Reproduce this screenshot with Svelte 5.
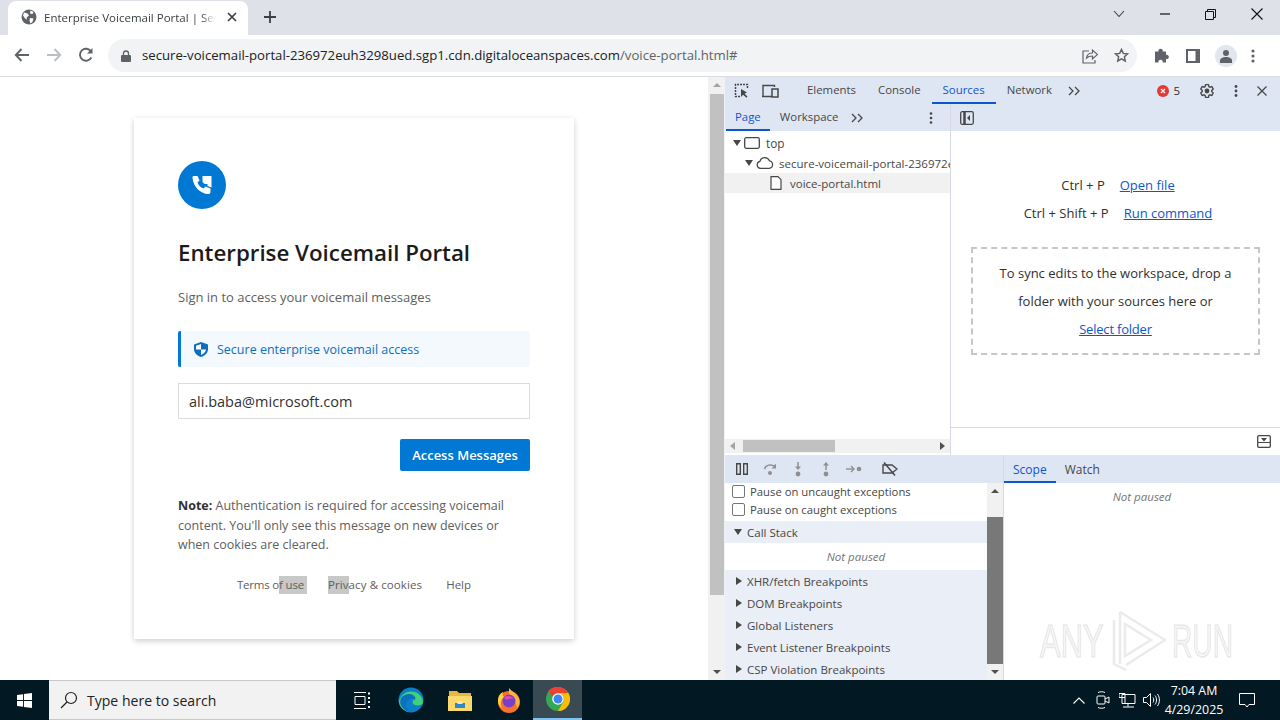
<script>
  const mainTabs = ['Elements', 'Console', 'Sources', 'Network'];
  const sections = ['XHR/fetch Breakpoints', 'DOM Breakpoints', 'Global Listeners', 'Event Listener Breakpoints', 'CSP Violation Breakpoints'];
</script>

<div class="screen">
  <header class="tabstrip">
    <div class="tab">
      <svg class="globe" width="16" height="16" viewBox="0 0 16 16"><circle cx="8" cy="8" r="7.5" fill="#5f6368"/><path d="M3 3.5l3.500 1 1.500 2-2 1.500-.5 2.500-1.500-1-2-3zM9.500 1.500l3 1.500-1 2-2.500-.5zM9 9l3.500.5-1 3.500-2 1.500-1-3z" fill="#fff"/></svg>
      <span class="tab-title">Enterprise Voicemail Portal | Secu</span>
      <svg width="10" height="10" viewBox="0 0 10 10"><path d="M1 1l8 8M9 1l-8 8" stroke="#3c4043" stroke-width="1.7"/></svg>
    </div>
    <svg class="newtab" width="12" height="12" viewBox="0 0 12 12"><path d="M6 0v12M0 6h12" stroke="#3c4043" stroke-width="1.8"/></svg>
    <div class="winctl">
      <svg width="12" height="8" viewBox="0 0 12 8"><path d="M1 1l5 5.500L11 1" fill="none" stroke="#3c4043" stroke-width="1.1"/></svg>
      <svg width="10" height="2" viewBox="0 0 10 2"><path d="M0 1h10" stroke="#111" stroke-width="1.2"/></svg>
      <svg width="11" height="11" viewBox="0 0 11 11"><path d="M.5 2.500h8v8h-8zM2.500 2.500v-2h8v8h-2" fill="none" stroke="#111"/></svg>
      <svg width="12" height="12" viewBox="0 0 12 12"><path d="M.5.500l11 11M11.500.500l-11 11" stroke="#111" stroke-width="1.1"/></svg>
    </div>
  </header>

  <div class="toolbar">
    <svg class="nav" width="16" height="14" viewBox="0 0 16 14"><path d="M15 7H2M7.500 1L1.800 7l5.700 6" fill="none" stroke="#5f6368" stroke-width="1.9"/></svg>
    <svg class="nav" width="16" height="14" viewBox="0 0 16 14"><path d="M1 7h13M8.500 1l5.700 6-5.700 6" fill="none" stroke="#bcc0c4" stroke-width="1.9"/></svg>
    <svg class="nav" width="16" height="16" viewBox="0 0 16 16"><path d="M13.300 10.500A6 6 0 1 1 13 4.500" fill="none" stroke="#5f6368" stroke-width="1.9"/><path d="M14.500 1v5.500H9z" fill="#5f6368"/></svg>
    <div class="omnibox">
      <svg width="10" height="12" viewBox="0 0 10 12"><path d="M2.500 5V3.500a2.500 2.500 0 0 1 5 0V5" fill="none" stroke="#5f6368" stroke-width="1.3"/><rect y="5" width="10" height="7" rx="1" fill="#5f6368"/></svg>
      <span class="url"><b>secure-voicemail-portal-236972euh3298ued.sgp1.cdn.digitaloceanspaces.com</b>/voice-portal.html#</span>
      <svg class="share" width="16" height="16" viewBox="0 0 16 16"><path d="M7 3H1v12h12v-3M4.500 10C5 6.500 8 5 10.500 5V2l5 4.500-5 4.500V8C8 8 6 8.500 4.500 10z" fill="none" stroke="#5f6368" stroke-width="1.2"/></svg>
      <svg width="15" height="15" viewBox="0 0 15 15"><path d="M7.500 1.500l1.800 3.900 4.200.5-3.100 2.900.8 4.200-3.700-2.100-3.700 2.100.8-4.200L1.500 5.900l4.200-.5z" fill="none" stroke="#5f6368" stroke-width="1.5"/></svg>
    </div>
    <div class="actions">
      <svg width="15" height="15" viewBox="0 0 15 15"><path d="M1 3.500h3.500a2.200 2.200 0 1 1 4.200 0H12v3.300a2.200 2.200 0 1 1 0 4.200V14.500H8.700a2.200 2.200 0 1 0-4.200 0H1z" fill="#5f6368"/></svg>
      <svg width="14" height="14" viewBox="0 0 14 14"><path d="M0 0h14v14H0z" fill="#5f6368"/><path d="M2 2h7.500v10H2z" fill="#fff"/></svg>
      <div class="avatar"><svg width="14" height="14" viewBox="0 0 14 14"><circle cx="7" cy="4" r="3" fill="#5f6368"/><path d="M1 14v-2.500C1 9.500 4 8 7 8s6 1.500 6 3.500V14z" fill="#5f6368"/></svg></div>
      <svg width="4" height="14" viewBox="0 0 4 14"><circle cx="2" cy="2" r="1.600" fill="#5f6368"/><circle cx="2" cy="7" r="1.600" fill="#5f6368"/><circle cx="2" cy="12" r="1.600" fill="#5f6368"/></svg>
    </div>
  </div>

  <main class="content">
    <section class="page">
      <div class="card">
        <div class="logo">
          <svg width="20" height="20" viewBox="0 0 20 20"><path d="M1.500 1h4l2 4.500-2 2c1 3 3 5 6 6l2-2 5 2v3.500c0 1-1 2-2 2C8 19 1 11 .5 2.500.5 1.500 1 1 1.500 1z" fill="#fff"/><path d="M10.500 1H19.500v11.500l-4-1.500V9h-3L10.500 7z" fill="#fff"/></svg>
        </div>
        <h1>Enterprise Voicemail Portal</h1>
        <p class="sub">Sign in to access your voicemail messages</p>
        <div class="banner">
          <svg width="14" height="15" viewBox="0 0 14 15"><path d="M7 0l7 2.500v4.500c0 3.800-3 6.800-7 8-4-1.200-7-4.200-7-8V2.500z" fill="#106ebe"/><path d="M7 2v5.500h5c-.3 2.500-2.400 4.600-5 5.500V7.500H2V3.800z" fill="#fff"/></svg>
          <span>Secure enterprise voicemail access</span>
        </div>
        <div class="input">ali.baba@microsoft.com</div>
        <div class="btn-row"><button>Access Messages</button></div>
        <p class="note"><strong>Note:</strong> Authentication is required for accessing voicemail content. You'll only see this message on new devices or when cookies are cleared.</p>
        <div class="links">
          <span class="terms">Terms o<i>f use</i></span>
          <span class="privacy"><i>Priv</i>acy &amp; cookies</span>
          <span>Help</span>
        </div>
      </div>
    </section>

    <div class="vscroll">
      <span class="arr up"></span>
      <div class="thumb"></div>
      <span class="arr down"></span>
    </div>

    <aside class="devtools">
      <div class="dt-top">
        <svg class="ic" width="16" height="15" viewBox="0 0 16 15"><path d="M6 13.500H1.500V1.500h12V6" fill="none" stroke="#474747" stroke-width="1.500" stroke-dasharray="2 1"/><path d="M7 6v8l2-2.200 3.500 3 1-1.200L10.500 10.800 13 9.500z" fill="#474747"/></svg>
        <svg class="ic ic2" width="17" height="14" viewBox="0 0 17 14"><path d="M10 12.500H1V1.500h11.500V3M0 12.500h8" fill="none" stroke="#474747" stroke-width="1.400"/><rect x="10" y="5" width="6" height="8" fill="none" stroke="#474747" stroke-width="1.500"/></svg>
        <div class="main-tabs">
          {#each mainTabs as t}
            <span class="mt" class:active={t === 'Sources'}>{t}</span>
          {/each}
        </div>
        <span class="chev">
          <svg width="12" height="10" viewBox="0 0 12 10"><path d="M1 1l4 4-4 4M7 1l4 4-4 4" fill="none" stroke="#474747" stroke-width="1.300"/></svg>
        </span>
        <div class="dt-right">
          <span class="err"><svg width="12" height="12" viewBox="0 0 12 12"><circle cx="6" cy="6" r="6" fill="#e23b36"/><path d="M4 4l4 4M8 4l-4 4" stroke="#fff" stroke-width="1.200"/></svg>5</span>
          <svg width="16" height="16" viewBox="0 0 24 24"><path d="M19.140 12.940c.04-.3.06-.61.06-.94 0-.32-.02-.64-.07-.94l2.030-1.580c.18-.14.23-.41.12-.61l-1.920-3.320c-.12-.22-.37-.29-.59-.22l-2.390.96c-.5-.38-1.030-.7-1.620-.94L14.400 2.810c-.04-.24-.24-.41-.48-.41h-3.840c-.24 0-.43.17-.47.41L9.250 5.350c-.59.24-1.130.57-1.620.94L5.240 5.330c-.22-.08-.47 0-.59.22L2.740 8.870c-.12.21-.08.47.12.61l2.030 1.580c-.05.3-.09.63-.09.94s.02.64.07.94l-2.030 1.580c-.18.14-.23.41-.12.61l1.920 3.320c.12.22.37.29.59.22l2.390-.96c.5.38 1.030.7 1.620.94l.36 2.540c.05.24.24.41.48.41h3.840c.24 0 .44-.17.47-.41l.36-2.540c.59-.24 1.130-.56 1.620-.94l2.390.96c.22.08.47 0 .59-.22l1.920-3.320c.12-.22.07-.47-.12-.61z" fill="none" stroke="#474747" stroke-width="2"/><circle cx="12" cy="12" r="3.600" fill="#474747"/></svg>
          <svg width="4" height="12" viewBox="0 0 4 12"><circle cx="2" cy="1.500" r="1.400" fill="#474747"/><circle cx="2" cy="6" r="1.400" fill="#474747"/><circle cx="2" cy="10.500" r="1.400" fill="#474747"/></svg>
          <svg width="10" height="10" viewBox="0 0 10 10"><path d="M.5.500l9 9M9.500.500l-9 9" stroke="#474747" stroke-width="1.300"/></svg>
        </div>
      </div>

      <div class="dt-sources">
        <div class="nav-pane">
          <div class="sub-tabs">
            <span class="st active">Page</span>
            <span class="st">Workspace</span>
            <svg width="12" height="10" viewBox="0 0 12 10"><path d="M1 1l4 4-4 4M7 1l4 4-4 4" fill="none" stroke="#474747" stroke-width="1.300"/></svg>
            <svg class="kebab" width="4" height="12" viewBox="0 0 4 12"><circle cx="2" cy="1.500" r="1.300" fill="#474747"/><circle cx="2" cy="6" r="1.300" fill="#474747"/><circle cx="2" cy="10.500" r="1.300" fill="#474747"/></svg>
          </div>
          <div class="tree">
            <div class="row r0"><span class="tri"></span><svg width="16" height="12" viewBox="0 0 16 12"><rect x=".7" y=".7" width="14.600" height="10.600" rx="1.500" fill="none" stroke="#474747" stroke-width="1.300"/></svg><span>top</span></div>
            <div class="row r1"><span class="tri"></span><svg width="18" height="12" viewBox="0 0 18 12"><path d="M4.500 11.300a3.500 3.500 0 0 1-.6-6.900 5 5 0 0 1 9.500-.6 3.800 3.800 0 0 1 0 7.500z" fill="none" stroke="#474747" stroke-width="1.200"/></svg><span class="clip">secure-voicemail-portal-236972euh3298ued.sgp1</span></div>
            <div class="row r2"><svg width="12" height="14" viewBox="0 0 12 14"><path d="M1 .7h7l3 3v9.600H1z" fill="#fff" stroke="#474747" stroke-width="1.200"/></svg><span>voice-portal.html</span></div>
          </div>
          <div class="hscroll">
            <span class="harr l"></span>
            <div class="hthumb"></div>
            <span class="harr r"></span>
          </div>
        </div>

        <div class="editor">
          <div class="editor-bar">
            <svg width="14" height="14" viewBox="0 0 14 14"><rect x=".7" y=".7" width="12.600" height="12.600" rx="1.500" fill="none" stroke="#474747" stroke-width="1.300"/><path d="M4.500 1v12" stroke="#474747" stroke-width="2.500"/><path d="M10 4v6L7 7z" fill="#474747"/></svg>
          </div>
          <div class="editor-body">
            <div class="shortcuts">
              <div class="sc"><span>Ctrl + P</span><a href="#a">Open file</a></div>
              <div class="sc"><span>Ctrl + Shift + P</span><a href="#a">Run command</a></div>
            </div>
            <div class="drop">
              <div>To sync edits to the workspace, drop a</div>
              <div>folder with your sources here or</div>
              <div><a href="#a">Select folder</a></div>
            </div>
          </div>
          <div class="editor-foot">
            <svg width="14" height="13" viewBox="0 0 14 13"><rect x=".7" y=".7" width="12.600" height="11.600" rx="1" fill="none" stroke="#474747" stroke-width="1.300"/><path d="M1 7.500h12" stroke="#474747"/><path d="M4 3h6L7 6.500z" fill="#474747"/></svg>
          </div>
        </div>
      </div>

      <div class="debug">
        <div class="dbg-left">
          <div class="dbg-bar">
            <svg width="12" height="12" viewBox="0 0 12 12"><path d="M.7.700h3.600v10.600H.7zM7.700.700h3.600v10.600H7.700z" fill="none" stroke="#474747" stroke-width="1.400"/></svg>
            <svg width="14" height="12" viewBox="0 0 14 12"><path d="M1.500 6C2.500 2 8 .500 12 3.500" fill="none" stroke="#8f8f8f" stroke-width="1.500"/><path d="M13 .5v5H8.500z" fill="#8f8f8f"/><circle cx="7" cy="10" r="2" fill="#8f8f8f"/></svg>
            <svg width="10" height="15" viewBox="0 0 10 15"><path d="M5 0v6" stroke="#8f8f8f" stroke-width="1.500"/><path d="M2 4.500h6L5 8z" fill="#8f8f8f"/><circle cx="5" cy="12" r="2.400" fill="#8f8f8f"/></svg>
            <svg width="10" height="15" viewBox="0 0 10 15"><path d="M5 8V2" stroke="#8f8f8f" stroke-width="1.500"/><path d="M2 3.500h6L5 0z" fill="#8f8f8f"/><circle cx="5" cy="12" r="2.400" fill="#8f8f8f"/></svg>
            <svg width="16" height="8" viewBox="0 0 16 8"><path d="M0 4h7" stroke="#8f8f8f" stroke-width="1.400"/><path d="M5 1l3 3-3 3" fill="none" stroke="#8f8f8f" stroke-width="1.400"/><circle cx="13" cy="4" r="2.300" fill="#8f8f8f"/></svg>
            <svg width="16" height="14" viewBox="0 0 16 14"><path d="M1 3h9l5 4-5 4H1z" fill="none" stroke="#474747" stroke-width="1.400"/><path d="M2 0.500l11 13" stroke="#474747" stroke-width="1.500"/></svg>
          </div>
          <div class="dbg-main">
            <div class="dbg-list">
              <label><span class="cb"></span>Pause on uncaught exceptions</label>
              <label class="l2"><span class="cb"></span>Pause on caught exceptions</label>
              <div class="sec open"><span class="tri"></span>Call Stack</div>
              <div class="notpaused">Not paused</div>
              {#each sections as s}
                <div class="sec closed"><span class="tri right"></span>{s}</div>
              {/each}
            </div>
            <div class="dbg-scroll">
              <span class="arr up dark"></span>
              <div class="dbg-thumb"></div>
              <span class="arr down dark"></span>
            </div>
          </div>
        </div>
        <div class="dbg-right">
          <div class="dbg-tabs"><span class="st2 active">Scope</span><span class="st2">Watch</span></div>
          <div class="notpaused np2">Not paused</div>
        </div>
      </div>

      <div class="watermark">
        <span class="wm-any">ANY</span>
        <svg width="56" height="62" viewBox="0 0 56 62"><path d="M10 2L55 30 16 55M4 10v44l12 6M10 2v52M15 14l26 16-26 16z" fill="none" stroke="#e4e4e4" stroke-width="2.500" opacity=".75"/></svg>
        <span class="wm-run">RUN</span>
      </div>
    </aside>
  </main>

  <footer class="taskbar">
    <div class="start"><svg width="15" height="15" viewBox="0 0 15 15"><path d="M0 2.100L6.100 1.200V7H0zM7 1.100L15 0v7H7zM0 8h6.100v5.800L0 12.900zM7 8h8v7l-8-1.100z" fill="#fff"/></svg></div>
    <div class="search">
      <svg width="18" height="18" viewBox="0 0 18 18"><circle cx="11" cy="7" r="5.500" fill="none" stroke="#222" stroke-width="1.200"/><path d="M7 11l-6 6" stroke="#222" stroke-width="1.300"/></svg>
      <span>Type here to search</span>
    </div>
    <div class="tb-apps">
      <div class="tb-app"><svg width="16" height="17" viewBox="0 0 16 17"><path d="M0 .5h12M0 16.500h12M1 4.500h10v8H1z" fill="none" stroke="#fff"/><path d="M14 .5h2v2h-2zM14 5h2v2h-2zM14 9h2v2h-2zM14 14h2v2h-2z" fill="#fff"/></svg></div>
      <div class="tb-app"><svg width="26" height="26" viewBox="0 0 26 26"><circle cx="13" cy="13" r="12.500" fill="#0c7fc9"/><path d="M1 14C3 6 11 3 17 5c5 2 8 6 8 10 0 3-4 4-8 3-3-1-3-4-1-5-3-2-8-1-9 4-.5 3 1 6 4 8C6 24 1 20 1 14z" fill="#3ed07a"/><path d="M3 11c3-4 9-5 12-3 2 1.500 3 3 2 5-3-2-8-1-9 4-.5 3 1 6 4 8C6 24 0 18 3 11z" fill="#0c6fc0"/></svg></div>
      <div class="tb-app"><svg width="24" height="22" viewBox="0 0 24 22"><path d="M1 2h8l2 2h12v4H1z" fill="#e8b73f"/><path d="M0 7h24v15H0z" fill="#fbd96d"/><path d="M7 14h10v5H7z" fill="#2f86c9"/><path d="M9.500 12h5v3h-5z" fill="#f8e7a9"/></svg></div>
      <div class="tb-app"><svg width="24" height="25" viewBox="0 0 24 25"><circle cx="12" cy="14" r="11" fill="#f9722a"/><path d="M12 0c2 3 8 5 10 11 1 4 0 7-2 9-1-7-5-10-8-11z" fill="#fbb43b"/><path d="M1 13C1 7 4 5 6 4c-1 3 0 4 1 5-4 3-4 8-2 11-2-1-4-4-4-7z" fill="#fcd440"/><circle cx="12" cy="13" r="6.500" fill="#7a3fc8"/><path d="M7 9c3-2 8-1 10 2-3-1-6 0-8 1z" fill="#e24ab0"/></svg></div>
      <div class="tb-app active"><svg width="24" height="24" viewBox="0 0 24 24"><circle cx="12" cy="12" r="12" fill="#34a853"/><path d="M12 0a12 12 0 0 1 10.400 6H12a6 6 0 0 0-5.500 3.600L2 3.900A12 12 0 0 1 12 0z" fill="#ea4335"/><path d="M22.400 6A12 12 0 0 1 12 24l5.200-9A6 6 0 0 0 12 6z" fill="#fbbc05"/><circle cx="12" cy="12" r="5.800" fill="#fff"/><circle cx="12" cy="12" r="4.500" fill="#4285f4"/></svg></div>
    </div>
    <div class="tray">
      <span class="ti"><svg width="12" height="7" viewBox="0 0 12 7"><path d="M.5 6.500L6 1l5.500 5.500" fill="none" stroke="#fff" stroke-width="1.100"/></svg></span>
      <span class="ti"><svg width="14" height="18" viewBox="0 0 14 18"><path d="M2 1.500c2-1 5-1 7 0M2 16.500c2 1 5 1 7 0" fill="none" stroke="#fff"/><rect x="1" y="5" width="8" height="8" rx="1" fill="none" stroke="#fff"/><path d="M9 8l4-2v6l-4-2" fill="none" stroke="#fff"/></svg></span>
      <span class="ti"><svg width="17" height="15" viewBox="0 0 17 15"><path d="M3 1.500h13v9H3zM0 .5h6v4H0zM9 10.500v3M4 14h11M6 4.500v6" fill="none" stroke="#fff"/></svg></span>
      <span class="ti"><svg width="17" height="14" viewBox="0 0 17 14"><path d="M.5 4.500h3l4-4v13l-4-4h-3zM10 4.500c1 1.500 1 3.500 0 5M12 2.500c2 2.500 2 6.500 0 9M14.500 1c2.500 3.500 2.500 8.500 0 12" fill="none" stroke="#fff"/></svg></span>
      <div class="clock"><div>7:04 AM</div><div>4/29/2025</div></div>
      <span class="ti notif"><svg width="16" height="15" viewBox="0 0 16 15"><path d="M.5.500h15v11H10l-2 2.500-2-2.500H.5z" fill="none" stroke="#fff"/></svg></span>
    </div>
  </footer>
</div>

<style>
  :global(body) { margin: 0; }
  .screen {
    width: 1280px;
    height: 720px;
    overflow: hidden;
    display: flex;
    flex-direction: column;
    font-family: "Open Sans", "Noto Sans", sans-serif;
    background: #fff;
    color: #303030;
  }
  svg { flex: none; }

  /* browser chrome */
  .tabstrip {
    height: 35px;
    flex: none;
    background: #dee1e8;
    display: flex;
    align-items: flex-end;
    padding-left: 8px;
  }
  .tab {
    width: 240px;
    height: 34px;
    box-sizing: border-box;
    background: #fff;
    border-radius: 8px 8px 0 0;
    display: flex;
    align-items: center;
    padding: 0 11px 2px 13px;
    gap: 7px;
  }
  .tab-title {
    font-size: 11.500px;
    color: #3c4043;
    flex: 1;
    white-space: nowrap;
    overflow: hidden;
    margin-right: 5px;
    mask-image: linear-gradient(to right, #000 92%, transparent);
  }
  .newtab { margin: 0 0 12px 16px; }
  .winctl {
    margin-left: auto;
    height: 35px;
    box-sizing: border-box;
    display: flex;
    align-items: center;
    gap: 35px;
    padding: 0 17px 7px 0;
  }
  .toolbar {
    height: 42px;
    flex: none;
    box-sizing: border-box;
    border-bottom: 1px solid #dadce0;
    display: flex;
    align-items: center;
    padding-left: 14px;
  }
  .nav { margin: -1px 16px 0 0; }
  .omnibox {
    width: 1029px;
    height: 33px;
    margin-left: -2px;
    box-sizing: border-box;
    background: #f1f3f4;
    border-radius: 17px;
    display: flex;
    align-items: center;
    padding: 0 8px 0 13px;
    gap: 11px;
  }
  .url { flex: 1; margin-top: -2px; color: #5f6368; white-space: nowrap; font-size: 13.180px; }
  .url b { font-weight: 400; color: #202124; }
  .share { margin-right: 5px; }
  .actions {
    display: flex;
    align-items: center;
    gap: 17px;
    margin-left: 17px;
  }
  .avatar {
    width: 22px;
    height: 22px;
    margin: 0 -3px 0 -2px;
    border-radius: 50%;
    background: #e3e6ec;
    display: flex;
    align-items: center;
    justify-content: center;
  }

  /* page */
  .content {
    flex: 1;
    min-height: 0;
    display: flex;
  }
  .page {
    width: 708px;
    flex: none;
    display: flex;
    justify-content: center;
    padding-top: 41px;
    box-sizing: border-box;
  }
  .card {
    width: 440px;
    height: 521px;
    box-sizing: border-box;
    padding: 43px 44px 0;
    box-shadow: 0 2px 6px rgba(0, 0, 0, 0.2);
    background: #fff;
  }
  .logo {
    width: 48px;
    height: 48px;
    border-radius: 50%;
    background: #0078d4;
    display: flex;
    align-items: center;
    justify-content: center;
  }
  h1 {
    margin: 27px 0 0;
    font-size: 22.300px;
    line-height: 34px;
    font-weight: 600;
    color: #1b1b1b;
  }
  .sub {
    margin: 18px 0 0;
    font-size: 13px;
    line-height: 18px;
    color: #605e5c;
  }
  .banner {
    margin-top: 25px;
    height: 36px;
    box-sizing: border-box;
    background: #f3f9fd;
    border-left: 3px solid #0078d4;
    display: flex;
    align-items: center;
    gap: 9px;
    padding-left: 13px;
    font-size: 12.500px;
    color: #106ebe;
    border-radius: 2px;
  }
  .input {
    margin-top: 16px;
    height: 36px;
    box-sizing: border-box;
    border: 1px solid #dcdcdc;
    padding-left: 10px;
    line-height: 36px;
    font-size: 14.500px;
    color: #323130;
  }
  .btn-row {
    margin-top: 20px;
    display: flex;
    justify-content: flex-end;
  }
  button {
    width: 130px;
    height: 32px;
    border: 0;
    padding: 0;
    background: #0078d4;
    color: #fff;
    font: 600 13px "Open Sans", sans-serif;
    border-radius: 2px;
  }
  .note {
    margin: 25px 0 0;
    font-size: 12.500px;
    line-height: 19.500px;
    color: #605e5c;
  }
  .note strong { color: #323130; font-weight: 700; }
  .links {
    margin-top: 21px;
    display: flex;
    justify-content: center;
    gap: 21px;
    font-size: 11.500px;
    line-height: 18px;
    color: #605e5c;
  }
  .terms { letter-spacing: -0.2px; padding-right: 3px; }
  .privacy { letter-spacing: 0.1px; padding-right: 3px; }
  .links i { font-style: normal; background: #c8c8c8; display: inline-block; }
  .terms i { padding-right: 3px; margin-right: -3px; }

  .vscroll {
    width: 17px;
    flex: none;
    background: #f1f1f1;
    display: flex;
    flex-direction: column;
    align-items: center;
  }
  .thumb {
    width: 14px;
    height: 501px;
    background: #c1c1c1;
    margin-top: 1px;
    margin-bottom: auto;
  }
  .arr {
    width: 0;
    height: 0;
    border-left: 4px solid transparent;
    border-right: 4px solid transparent;
    margin: 6px 0;
    flex: none;
  }
  .arr.up { border-bottom: 4px solid #a3a3a3; }
  .arr.down { border-top: 4px solid #505050; }
  .arr.up.dark { border-bottom-color: #505050; }

  /* devtools */
  .devtools {
    flex: 1;
    min-width: 0;
    position: relative;
    display: flex;
    flex-direction: column;
    font-size: 11.400px;
    overflow: hidden;
  }
  .dt-top {
    height: 27px;
    flex: none;
    background: #dfe6f3;
    display: flex;
    align-items: center;
    padding-left: 9px;
  }
  .ic2 { margin-left: 12px; }
  .main-tabs { display: flex; margin-left: 17px; }
  .mt {
    padding: 0 11px;
    line-height: 25px;
    height: 27px;
    box-sizing: border-box;
    color: #474747;
  }
  .mt.active { color: #0b57d0; border-bottom: 2px solid #0b57d0; }
  .chev { margin-left: 5px; display: flex; }
  .dt-right {
    margin-left: auto;
    display: flex;
    align-items: center;
    gap: 19px;
    padding-right: 13px;
  }
  .err { display: flex; align-items: center; gap: 4px; font-size: 11.500px; }
  .dt-sources { height: 351px; flex: none; display: flex; }
  .nav-pane {
    width: 225px;
    flex: none;
    border-right: 1px solid #d6dbe3;
    display: flex;
    flex-direction: column;
  }
  .sub-tabs {
    height: 27px;
    flex: none;
    background: #dfe6f3;
    display: flex;
    align-items: center;
    padding-left: 1px;
  }
  .st { padding: 0 9px; line-height: 25px; height: 27px; box-sizing: border-box; color: #474747; margin-right: 1px; }
  .st.active { color: #0b57d0; border-bottom: 2px solid #0b57d0; }
  .sub-tabs svg { margin-left: 3px; }
  .sub-tabs .kebab { margin-left: 66px; }
  .tree { flex: 1; padding-top: 2px; }
  .row {
    height: 20px;
    display: flex;
    align-items: center;
    gap: 3px;
    color: #474747;
    font-size: 11.800px;
    white-space: nowrap;
    overflow: hidden;
  }
  .r0 { padding-left: 8px; }
  .r1 { padding-left: 20px; }
  .r2 { padding-left: 45px; background: #f1f1f1; gap: 8px; font-size: 11.500px; }
  .r0 svg { margin-right: 3px; }
  .r1 svg { margin-right: 2px; }
  .clip { font-size: 11.500px; }
  .tri {
    width: 0;
    height: 0;
    flex: none;
    border-left: 4px solid transparent;
    border-right: 4px solid transparent;
    border-top: 6px solid #474747;
  }
  .tri.right {
    border-top: 4px solid transparent;
    border-bottom: 4px solid transparent;
    border-left: 6px solid #474747;
    border-right: 0;
  }
  .hscroll {
    height: 14px;
    margin-bottom: 2px;
    background: #f1f1f1;
    display: flex;
    align-items: center;
    flex: none;
  }
  .hthumb { width: 92px; height: 12px; background: #c1c1c1; margin-left: 3px; margin-right: auto; }
  .harr { width: 0; height: 0; border-top: 4px solid transparent; border-bottom: 4px solid transparent; margin: 0 5px; flex: none; }
  .harr.l { border-right: 5px solid #a3a3a3; }
  .harr.r { border-left: 5px solid #505050; }

  .editor { flex: 1; min-width: 0; display: flex; flex-direction: column; }
  .editor-bar {
    height: 27px;
    flex: none;
    background: #dfe6f3;
    display: flex;
    align-items: center;
    padding-left: 9px;
  }
  .editor-body { flex: 1; padding: 44px 20px 0; font-size: 13px; }
  .shortcuts { display: flex; flex-direction: column; gap: 8px; }
  .sc { display: flex; justify-content: center; gap: 15px; line-height: 20px; margin-left: 5px; }
  .sc span { color: #303030; }
  a { color: #0b57d0; text-decoration: underline; }
  .drop {
    margin-top: 24px;
    height: 108px;
    box-sizing: border-box;
    border: 2px dashed #c4c7c5;
    text-align: center;
    line-height: 28px;
    padding-top: 10px;
  }
  .drop a { letter-spacing: -0.2px; }
  .editor-foot {
    height: 27px;
    flex: none;
    border-top: 1px solid #d6dbe3;
    display: flex;
    align-items: center;
    justify-content: flex-end;
    padding-right: 9px;
  }

  .debug { flex: 1; min-height: 0; display: flex; }
  .dbg-left { width: 278px; flex: none; border-right: 1px solid #d6dbe3; display: flex; flex-direction: column; }
  .dbg-bar {
    height: 28px;
    flex: none;
    background: #dfe6f3;
    display: grid;
    grid-template-columns: repeat(5, 28px) 44px;
    align-items: center;
    justify-items: center;
    padding-left: 3px;
  }
  .dbg-main { flex: 1; min-height: 0; display: flex; }
  .dbg-list { flex: 1; min-width: 0; margin-top: -1px; color: #474747; font-size: 11.500px; }
  label {
    display: flex;
    align-items: center;
    gap: 5px;
    height: 18px;
    padding-left: 7px;
    font-size: 11.300px;
  }
  .cb {
    width: 11px;
    height: 11px;
    border: 1px solid #767676;
    border-radius: 2px;
    background: #fff;
  }
  .sec {
    height: 22px;
    background: #e9eef7;
    display: flex;
    align-items: center;
    gap: 5px;
    padding-left: 9px;
    white-space: nowrap;
  }
  .sec.closed { padding-left: 11px; }
  .sec.open { margin-top: 3px; }
  .notpaused {
    height: 27px;
    line-height: 27px;
    text-align: center;
    font-style: italic;
    color: #757575;
    font-size: 11.500px;
  }
  .dbg-scroll {
    width: 16px;
    flex: none;
    background: #f1f1f1;
    display: flex;
    flex-direction: column;
    align-items: center;
  }
  .dbg-thumb { width: 100%; height: 147px; background: #787878; margin-top: 18px; flex: none; }
  .dbg-right { flex: 1; min-width: 0; }
  .dbg-tabs {
    height: 28px;
    background: #dfe6f3;
    display: flex;
    font-size: 12px;
  }
  .st2 { padding: 0 9px; line-height: 29px; box-sizing: border-box; height: 28px; color: #474747; }
  .st2.active { color: #0b57d0; border-bottom: 2px solid #0b57d0; }

  /* watermark sits over the bottom of the devtools */
  .watermark {
    position: absolute;
    left: 315px;
    top: 533px;
    width: 195px;
    height: 62px;
    pointer-events: none;
    font: 400 47px "Liberation Sans", sans-serif;
    line-height: 62px;
    color: rgba(232, 232, 232, 0.4);
    -webkit-text-stroke: 1.500px rgba(205, 205, 205, 0.4);
    filter: blur(0.6px);
  }
  .watermark svg { position: absolute; left: 70px; top: 0; }
  .wm-any, .wm-run {
    position: absolute;
    top: 0;
    transform-origin: left center;
  }
  .wm-any { left: 0; transform: scaleX(0.66); }
  .wm-run { left: 132px; transform: scaleX(0.6); }

  /* taskbar */
  .taskbar {
    height: 40px;
    flex: none;
    background: #021822;
    display: flex;
    color: #fff;
  }
  .start { width: 49px; display: flex; align-items: center; justify-content: center; }
  .search {
    width: 287px;
    background: #f2f2f2;
    box-sizing: border-box;
    border: 1px solid #c8c8c8;
    border-width: 1px 0;
    display: flex;
    align-items: center;
    gap: 9px;
    padding-left: 11px;
    color: #222;
    font-size: 14.050px;
  }
  .tb-apps { display: flex; margin-left: 1px; }
  .tb-app {
    width: 49px;
    display: flex;
    align-items: center;
    justify-content: center;
    box-sizing: border-box;
  }
  .tb-app.active { background: #3a4a52; border-bottom: 2px solid #7fc4f0; }
  .tray {
    margin-left: auto;
    display: flex;
    align-items: center;
    padding-right: 11px;
  }
  .ti { width: 24px; display: flex; justify-content: center; }
  .ti.notif { width: 44px; }
  .clock { width: 62px; text-align: center; font-size: 12.400px; line-height: 19px; }
</style>
